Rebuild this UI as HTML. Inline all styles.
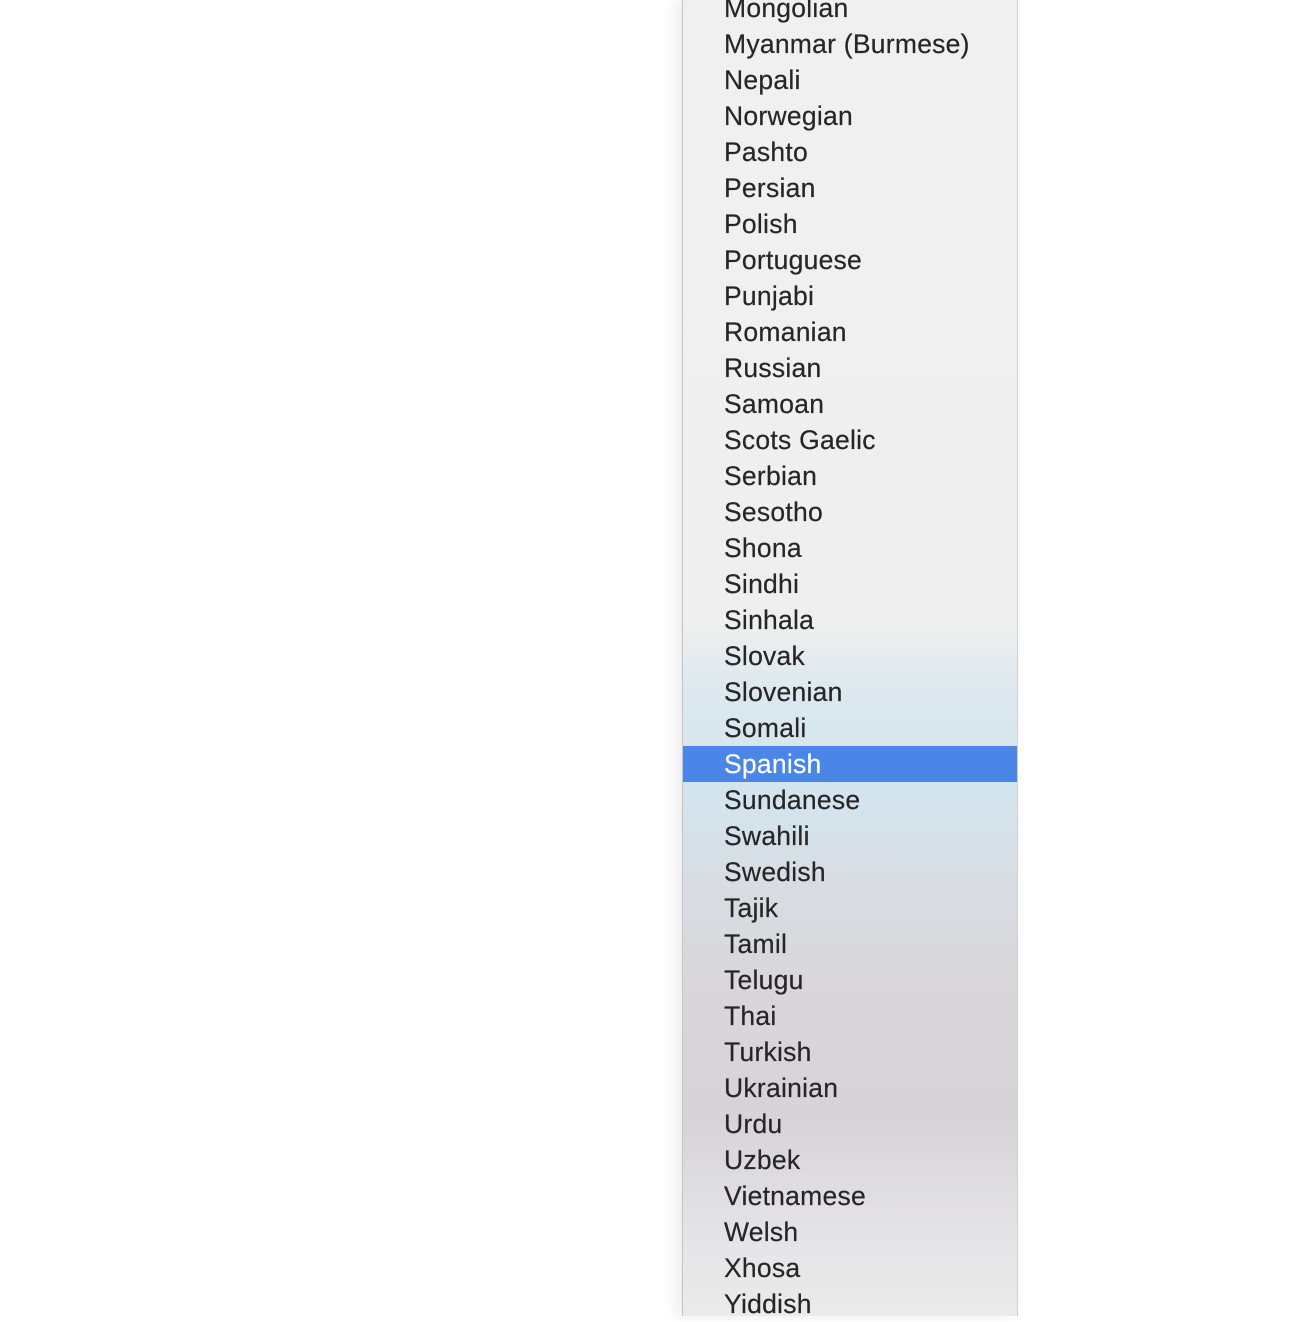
<!DOCTYPE html>
<html><head><style>
html,body{margin:0;padding:0;width:1316px;height:1316px;background:#fff;overflow:hidden}
.menu{position:absolute;left:682px;top:0;width:336px;height:1316px;
background:linear-gradient(to bottom,#f0f0f0 0px,#efefef 620px,#dbe8ef 700px,#d3e4ee 800px,#d8dde3 880px,#d9d6d9 1000px,#d6d4d7 1120px,#e6e5e7 1250px,#ebebeb 1316px);
border-left:1px solid #c4c4c4;border-right:1px solid #d0d0d0;box-sizing:border-box;
box-shadow:-6px 0 14px rgba(0,0,0,0.08)}
.list{position:absolute;left:0;top:-10px;width:100%}
.it{height:36px;line-height:36px;padding-left:41px;font-family:"Liberation Sans",sans-serif;font-size:26.5px;letter-spacing:0.25px;color:#262626;white-space:nowrap;-webkit-text-stroke:0.2px #262626}
.sel{background:#4a86e8;color:#fff;-webkit-text-stroke:0.2px #fff}
</style></head><body>
<div class="menu"><div class="list">
<div class="it">Mongolian</div>
<div class="it">Myanmar (Burmese)</div>
<div class="it">Nepali</div>
<div class="it">Norwegian</div>
<div class="it">Pashto</div>
<div class="it">Persian</div>
<div class="it">Polish</div>
<div class="it">Portuguese</div>
<div class="it">Punjabi</div>
<div class="it">Romanian</div>
<div class="it">Russian</div>
<div class="it">Samoan</div>
<div class="it">Scots Gaelic</div>
<div class="it">Serbian</div>
<div class="it">Sesotho</div>
<div class="it">Shona</div>
<div class="it">Sindhi</div>
<div class="it">Sinhala</div>
<div class="it">Slovak</div>
<div class="it">Slovenian</div>
<div class="it">Somali</div>
<div class="it sel">Spanish</div>
<div class="it">Sundanese</div>
<div class="it">Swahili</div>
<div class="it">Swedish</div>
<div class="it">Tajik</div>
<div class="it">Tamil</div>
<div class="it">Telugu</div>
<div class="it">Thai</div>
<div class="it">Turkish</div>
<div class="it">Ukrainian</div>
<div class="it">Urdu</div>
<div class="it">Uzbek</div>
<div class="it">Vietnamese</div>
<div class="it">Welsh</div>
<div class="it">Xhosa</div>
<div class="it">Yiddish</div>
</div></div>
</body></html>
